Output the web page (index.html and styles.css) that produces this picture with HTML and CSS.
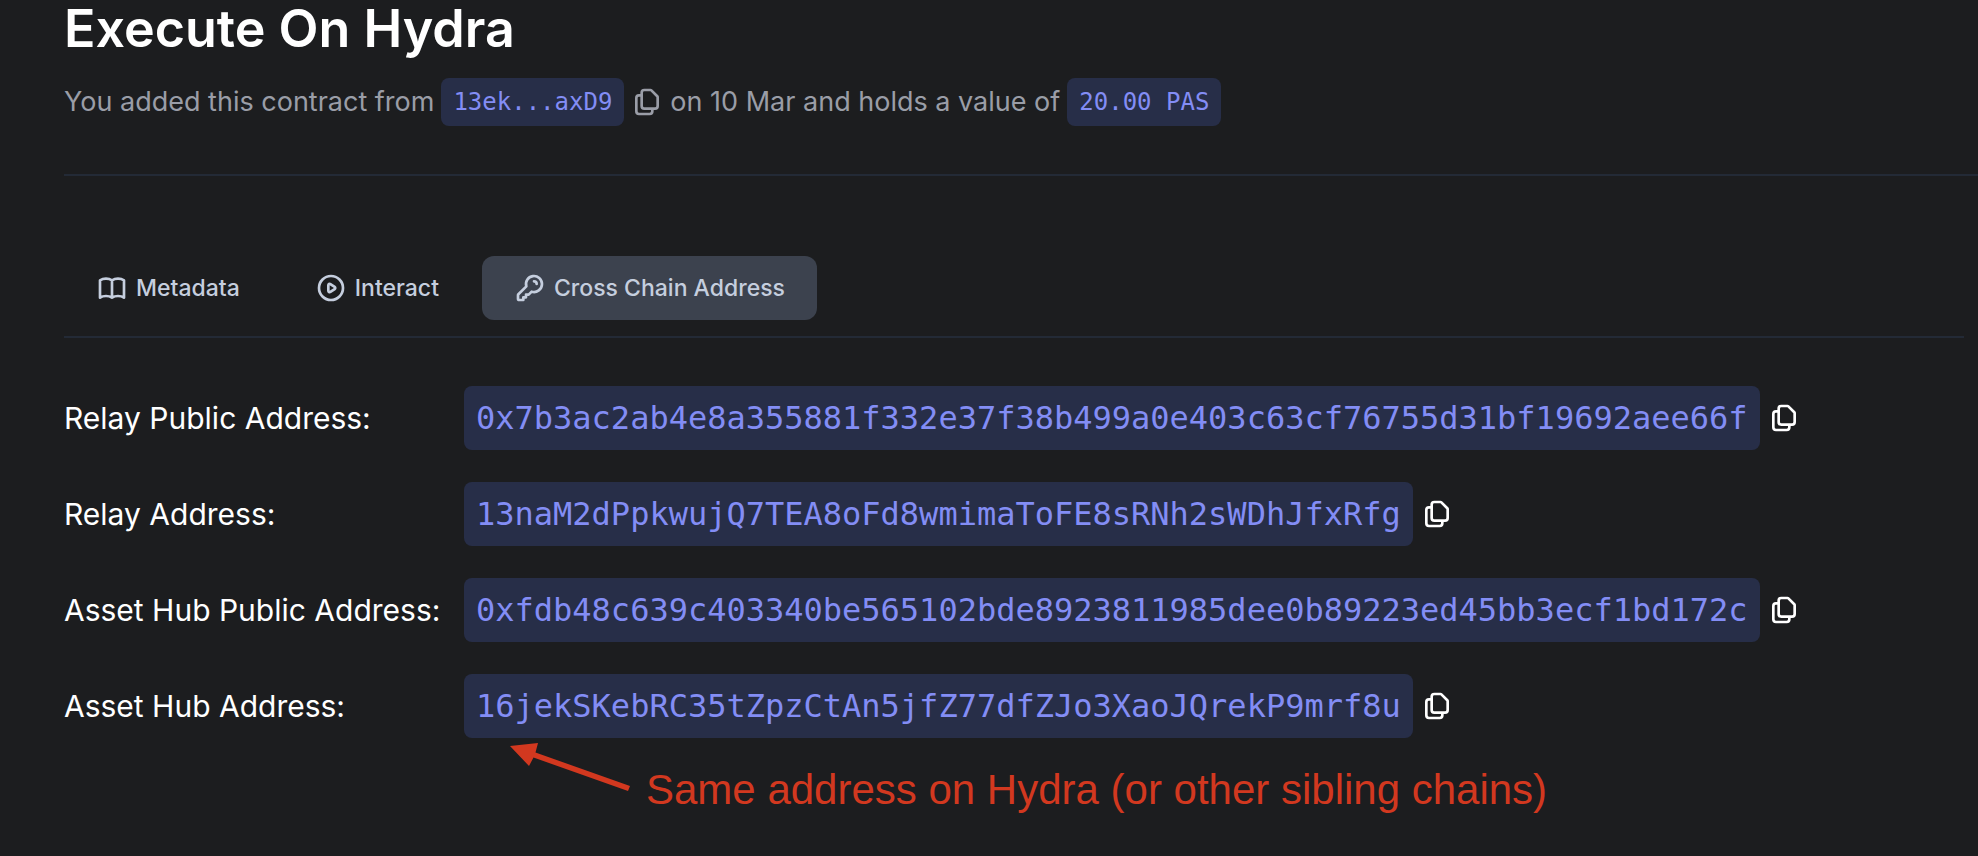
FILE: index.html
```html
<!DOCTYPE html>
<html lang="en">
<head>
<meta charset="utf-8">
<meta name="viewport" content="width=device-width, initial-scale=1">
<title>Execute On Hydra</title>
<link rel="stylesheet" href="styles.css">
</head>
<body>
<svg class="symbols" aria-hidden="true">
  <symbol id="copy" viewBox="0 0 24 24"><path d="M8 7v8a2 2 0 0 0 2 2h6M8 7V5a2 2 0 0 1 2-2h4.586a1 1 0 0 1 .707.293l4.414 4.414a1 1 0 0 1 .293.707V15a2 2 0 0 1-2 2h-2M8 7H6a2 2 0 0 0-2 2v10a2 2 0 0 0 2 2h8a2 2 0 0 0 2-2v-2"/></symbol>
</svg>
<main class="page">
  <header class="head">
    <h1 class="title">Execute On Hydra</h1>
    <p class="summary">
      <span>You added this contract from</span>
      <code class="chip">13ek...axD9</code>
      <button class="copy" type="button" aria-label="Copy owner address"><svg class="icon"><use href="#copy"/></svg></button>
      <span>on 10 Mar and holds a value of</span>
      <code class="chip">20.00 PAS</code>
    </p>
  </header>
  <section class="panel">
    <nav class="tabs" role="tablist">
      <button class="tab" type="button" role="tab" aria-selected="false">
        <svg class="icon" viewBox="0 0 24 24" aria-hidden="true"><path d="M12 6.253v13m0-13C10.832 5.477 9.246 5 7.500 5S4.168 5.477 3 6.253v13C4.168 18.477 5.754 18 7.500 18s3.332.477 4.500 1.253m0-13C13.168 5.477 14.754 5 16.500 5c1.747 0 3.332.477 4.500 1.253v13C19.832 18.477 18.247 18 16.500 18c-1.746 0-3.332.477-4.500 1.253"/></svg>
        Metadata
      </button>
      <button class="tab" type="button" role="tab" aria-selected="false">
        <svg class="icon" viewBox="0 0 24 24" aria-hidden="true"><path d="M14.752 11.168l-3.197-2.132A1 1 0 0 0 10 9.870v4.263a1 1 0 0 0 1.555.832l3.197-2.132a1 1 0 0 0 0-1.664z"/><path d="M21 12a9 9 0 1 1-18 0 9 9 0 0 1 18 0z"/></svg>
        Interact
      </button>
      <button class="tab tab-active" type="button" role="tab" aria-selected="true">
        <svg class="icon" viewBox="0 0 24 24" aria-hidden="true"><path d="M15 7a2 2 0 0 1 2 2m4 0a6 6 0 0 1-7.743 5.743L11 17H9v2H7v2H4a1 1 0 0 1-1-1v-2.586a1 1 0 0 1 .293-.707l5.964-5.964A6 6 0 1 1 21 9z"/></svg>
        Cross Chain Address
      </button>
    </nav>
    <dl class="addresses">
      <dt class="label">Relay Public Address:</dt>
      <dd class="value"><code class="chip chip-large">0x7b3ac2ab4e8a355881f332e37f38b499a0e403c63cf76755d31bf19692aee66f</code><button class="copy" type="button" aria-label="Copy relay public address"><svg class="icon"><use href="#copy"/></svg></button></dd>
      <dt class="label">Relay Address:</dt>
      <dd class="value"><code class="chip chip-large">13naM2dPpkwujQ7TEA8oFd8wmimaToFE8sRNh2sWDhJfxRfg</code><button class="copy" type="button" aria-label="Copy relay address"><svg class="icon"><use href="#copy"/></svg></button></dd>
      <dt class="label">Asset Hub Public Address:</dt>
      <dd class="value"><code class="chip chip-large">0xfdb48c639c403340be565102bde8923811985dee0b89223ed45bb3ecf1bd172c</code><button class="copy" type="button" aria-label="Copy asset hub public address"><svg class="icon"><use href="#copy"/></svg></button></dd>
      <dt class="label">Asset Hub Address:</dt>
      <dd class="value"><code class="chip chip-large">16jekSKebRC35tZpzCtAn5jfZ77dfZJo3XaoJQrekP9mrf8u</code><button class="copy" type="button" aria-label="Copy asset hub address"><svg class="icon"><use href="#copy"/></svg></button></dd>
    </dl>
    <p class="note">
      <svg class="arrow" viewBox="0 0 120 50" aria-hidden="true"><path d="M0 4 28 1 25.500 10.500 120 44 118 49 23.500 15.500 19 24z"/></svg>
      <span class="note-text">Same address on Hydra (or other sibling chains)</span>
    </p>
  </section>
</main>
</body>
</html>
```
FILE: styles.css
```css
* {
  box-sizing: border-box;
}

body {
  margin: 0;
  background: #1c1d1f;
  color: #ffffff;
  font-family: Inter, "Liberation Sans", sans-serif;
}

.symbols {
  display: none;
}

.page {
  padding-left: 64px;
}

.head {
  padding-bottom: 48px;
  border-bottom: 2px solid #232a36;
}

.title {
  margin: 0;
  font-size: 52px;
  font-weight: 600;
  line-height: 58px;
}

.summary {
  display: flex;
  flex-wrap: wrap;
  align-items: center;
  gap: 7px;
  margin: 20px 0 0;
  color: #9a9da7;
  font-size: 27px;
  line-height: 48px;
}

.chip {
  padding: 0 12px;
  border-radius: 8px;
  background: #272e48;
  color: #838df5;
  font-family: "DejaVu Sans Mono", monospace;
  font-size: 24px;
  line-height: 48px;
}

.chip-large {
  font-size: 32px;
  line-height: 64px;
}

.copy {
  display: flex;
  padding: 0;
  border: 0;
  background: none;
  color: inherit;
}

.icon {
  flex: none;
  width: 32px;
  height: 32px;
  fill: none;
  stroke: currentColor;
  stroke-width: 2;
  stroke-linecap: round;
  stroke-linejoin: round;
}

.panel {
  padding: 80px 14px 0 0;
}

.tabs {
  display: flex;
  gap: 11px;
  padding-bottom: 16px;
  border-bottom: 2px solid #232a36;
}

.tab {
  display: flex;
  align-items: center;
  gap: 8px;
  padding: 16px 32px;
  border: 0;
  border-radius: 12px;
  background: none;
  color: #c5cede;
  font-family: inherit;
  font-size: 23px;
  font-weight: 500;
  line-height: 32px;
}

.tab-active {
  background: #3c424e;
}

.addresses {
  display: grid;
  grid-template-columns: 400px 1fr;
  row-gap: 32px;
  margin: 48px 0 0;
}

.label {
  font-size: 30px;
  line-height: 64px;
}

.value {
  display: flex;
  align-items: center;
  gap: 8px;
  margin: 0;
}

.note {
  display: flex;
  align-items: flex-start;
  gap: 16px;
  margin: 4px 0 0 446px;
  color: #d2381f;
  font-family: "Liberation Sans", sans-serif;
  font-size: 42px;
  line-height: 48px;
}

.note-text {
  padding-top: 24px;
}

.arrow {
  flex: none;
  width: 120px;
  height: 50px;
  fill: currentColor;
}
```
